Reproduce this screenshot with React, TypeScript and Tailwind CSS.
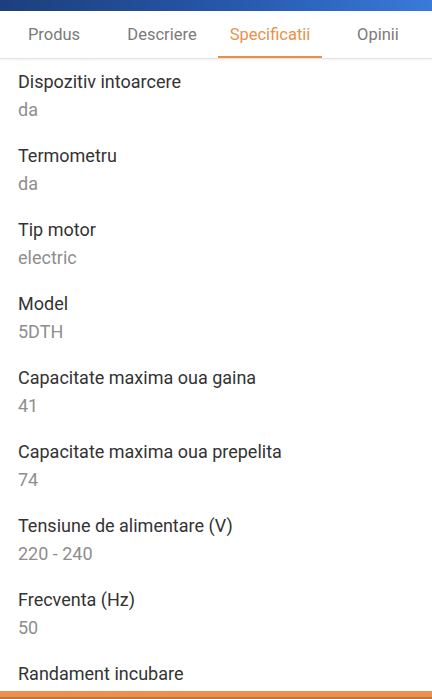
const tabs = ['Produs', 'Descriere', 'Specificatii', 'Opinii'];

const specs = [
  { label: 'Dispozitiv intoarcere', value: 'da' },
  { label: 'Termometru', value: 'da' },
  { label: 'Tip motor', value: 'electric' },
  { label: 'Model', value: '5DTH' },
  { label: 'Capacitate maxima oua gaina', value: '41' },
  { label: 'Capacitate maxima oua prepelita', value: '74' },
  { label: 'Tensiune de alimentare (V)', value: '220 - 240' },
  { label: 'Frecventa (Hz)', value: '50' },
  { label: 'Randament incubare', value: '' },
];

export default function App() {
  return (
    <div
      className="relative h-[699px] w-[432px] overflow-hidden bg-white"
      style={{ fontFamily: 'Roboto, "Noto Sans", sans-serif' }}
    >
      <div className="h-[11px] bg-gradient-to-r from-[#1d3f7c] via-[#2556a8] to-[#3a7ad9]" />

      <nav className="grid h-[48px] grid-cols-4 border-b border-[#e4e4e4] shadow-[0_1px_2px_rgba(0,0,0,0.06)]">
        {tabs.map((tab) => {
          const active = tab === 'Specificatii';
          return (
            <div key={tab} className="relative flex items-center justify-center pt-[2px]">
              <span className={`text-[16.5px] ${active ? 'text-[#e8914a]' : 'text-[#7a7a7a]'}`}>{tab}</span>
              {active && <div className="absolute inset-x-[2px] bottom-0 h-[2px] bg-[#e8914a]" />}
            </div>
          );
        })}
      </nav>

      <section>
        {specs.map((spec) => (
          <div key={spec.label} className="px-[18px] py-[9px]">
            <p className="text-[18px] leading-[28px] text-[#333333]">{spec.label}</p>
            <p className="h-[28px] text-[18px] leading-[28px] text-[#8e8e8e]">{spec.value}</p>
          </div>
        ))}
      </section>

      <div className="absolute inset-x-0 bottom-0 h-[8px] border-b-2 border-[#c9703a] bg-[#ea914d]" />
    </div>
  );
}
